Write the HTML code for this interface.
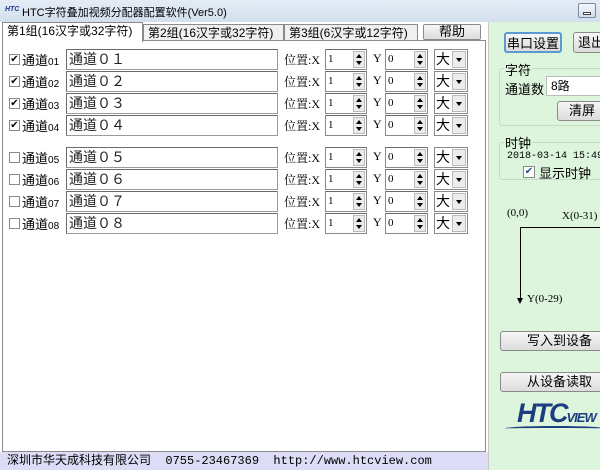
<!DOCTYPE html>
<html><head><meta charset="utf-8"><style>
*{box-sizing:border-box;margin:0;padding:0}
body{width:600px;height:470px;overflow:hidden;position:relative;background:#fff;font-family:"Liberation Sans","Noto Sans CJK SC",sans-serif;font-size:12px;color:#000}
.a{position:absolute}
.title{left:0;top:0;width:600px;height:22px;background:linear-gradient(#e4ecf6,#d3dfee);}
.tab{height:18px;border:1px solid #8a8a8a;border-bottom:none;background:#f0f0f0;font-size:12px;line-height:16px;padding-left:4px;white-space:nowrap}
.panel{left:2px;top:40px;width:484px;height:412px;border:1px solid #8c8c8c;background:#fff}
.cb{width:11px;height:11px;border:1px solid #8a8a8a;background:#fff;font-size:10px;line-height:9px;text-align:center}
.lbl{font-size:13px}
.lbl small{font-size:10px}
.inp{height:21px;border:1px solid #9a9a9a;border-top-color:#6a6a6a;border-left-color:#6a6a6a;background:#fff;font-size:14px;line-height:18px;padding-left:2px;white-space:nowrap;color:#222}
.pos{font-size:12px;font-family:"Liberation Serif","Noto Serif CJK SC",serif}
.spin{height:21px;border:1px solid #8a8a8a;border-top-color:#6a6a6a;background:#fff;font-size:11px;line-height:19px;padding-left:2px;font-family:"Liberation Serif",serif}
.spin i{position:absolute;right:1px;top:1px;width:12px;height:17px;background:#ececec;border:1px solid #bbb}
.spin i:before{content:"";position:absolute;left:2px;top:2px;border:3px solid transparent;border-bottom:4px solid #000;border-top:none}
.spin i:after{content:"";position:absolute;left:2px;bottom:2px;border:3px solid transparent;border-top:4px solid #000;border-bottom:none}
.cmb{height:21px;border:1px solid #8a8a8a;background:#fff;font-size:14px;line-height:19px;padding-left:1px}
.cmb i{position:absolute;right:1px;top:1px;width:14px;height:17px;background:#ececec;border:1px solid #bbb}
.cmb i:after{content:"";position:absolute;left:3px;top:6px;border:3px solid transparent;border-top:4px solid #000;border-bottom:none}
.btn{border:1px solid #8a8a8a;border-radius:3px;background:linear-gradient(#f6f6f6,#dcdcdc);text-align:center;font-size:13px}
.right{left:488px;top:22px;width:112px;height:448px;background:#dcf5dc;border-left:1px solid #c8c8c8}
.grp{border:1px solid #c4dcc4;border-radius:3px}
.status{left:0;top:452px;width:488px;height:18px;background:#dcdcf6;font-size:12px;line-height:18px;padding-left:7px;white-space:pre;font-family:"Liberation Mono","Noto Sans CJK SC",monospace}
</style></head><body>
<div class="a title"></div>
<div class="a" style="left:5px;top:6px;font-size:7px;font-weight:bold;font-style:italic;color:#1a3a8a">HTC</div>
<div class="a" style="left:22px;top:4px;font-size:11px">HTC字符叠加视频分配器配置软件(Ver5.0)</div>
<div class="a" style="left:578px;top:3px;width:18px;height:15px;border:1px solid #7a8aa0;border-radius:2px;background:linear-gradient(#f4f7fb,#d4dce8)"><div class="a" style="left:4px;top:8px;width:8px;height:3px;background:#fff;border:1px solid #444"></div></div>

<div class="a tab" style="left:2px;top:22px;width:141px;height:20px;background:#fff;z-index:2">第1组(16汉字或32字符)</div>
<div class="a tab" style="left:143px;top:24px;width:141px">第2组(16汉字或32字符)</div>
<div class="a tab" style="left:284px;top:24px;width:134px">第3组(6汉字或12字符)</div>
<div class="a btn" style="left:423px;top:24px;width:58px;height:16px;line-height:14px;border-radius:2px">帮助</div>
<div class="a panel"></div>

<div class="a cb" style="left:9px;top:54px">✔</div><div class="a lbl" style="left:22px;top:50px">通道<small>01</small></div><div class="a inp" style="left:66px;top:49px;width:212px">通道０１</div><div class="a pos" style="left:284px;top:51px">位置:X</div><div class="a spin" style="left:325px;top:49px;width:42px">1<i></i></div><div class="a pos" style="left:373px;top:51px">Y</div><div class="a spin" style="left:385px;top:49px;width:43px">0<i></i></div><div class="a cmb" style="left:434px;top:49px;width:34px">大<i></i></div>
<div class="a cb" style="left:9px;top:76px">✔</div><div class="a lbl" style="left:22px;top:72px">通道<small>02</small></div><div class="a inp" style="left:66px;top:71px;width:212px">通道０２</div><div class="a pos" style="left:284px;top:73px">位置:X</div><div class="a spin" style="left:325px;top:71px;width:42px">1<i></i></div><div class="a pos" style="left:373px;top:73px">Y</div><div class="a spin" style="left:385px;top:71px;width:43px">0<i></i></div><div class="a cmb" style="left:434px;top:71px;width:34px">大<i></i></div>
<div class="a cb" style="left:9px;top:98px">✔</div><div class="a lbl" style="left:22px;top:94px">通道<small>03</small></div><div class="a inp" style="left:66px;top:93px;width:212px">通道０３</div><div class="a pos" style="left:284px;top:95px">位置:X</div><div class="a spin" style="left:325px;top:93px;width:42px">1<i></i></div><div class="a pos" style="left:373px;top:95px">Y</div><div class="a spin" style="left:385px;top:93px;width:43px">0<i></i></div><div class="a cmb" style="left:434px;top:93px;width:34px">大<i></i></div>
<div class="a cb" style="left:9px;top:120px">✔</div><div class="a lbl" style="left:22px;top:116px">通道<small>04</small></div><div class="a inp" style="left:66px;top:115px;width:212px">通道０４</div><div class="a pos" style="left:284px;top:117px">位置:X</div><div class="a spin" style="left:325px;top:115px;width:42px">1<i></i></div><div class="a pos" style="left:373px;top:117px">Y</div><div class="a spin" style="left:385px;top:115px;width:43px">0<i></i></div><div class="a cmb" style="left:434px;top:115px;width:34px">大<i></i></div>
<div class="a cb" style="left:9px;top:152px"></div><div class="a lbl" style="left:22px;top:148px">通道<small>05</small></div><div class="a inp" style="left:66px;top:147px;width:212px">通道０５</div><div class="a pos" style="left:284px;top:149px">位置:X</div><div class="a spin" style="left:325px;top:147px;width:42px">1<i></i></div><div class="a pos" style="left:373px;top:149px">Y</div><div class="a spin" style="left:385px;top:147px;width:43px">0<i></i></div><div class="a cmb" style="left:434px;top:147px;width:34px">大<i></i></div>
<div class="a cb" style="left:9px;top:174px"></div><div class="a lbl" style="left:22px;top:170px">通道<small>06</small></div><div class="a inp" style="left:66px;top:169px;width:212px">通道０６</div><div class="a pos" style="left:284px;top:171px">位置:X</div><div class="a spin" style="left:325px;top:169px;width:42px">1<i></i></div><div class="a pos" style="left:373px;top:171px">Y</div><div class="a spin" style="left:385px;top:169px;width:43px">0<i></i></div><div class="a cmb" style="left:434px;top:169px;width:34px">大<i></i></div>
<div class="a cb" style="left:9px;top:196px"></div><div class="a lbl" style="left:22px;top:192px">通道<small>07</small></div><div class="a inp" style="left:66px;top:191px;width:212px">通道０７</div><div class="a pos" style="left:284px;top:193px">位置:X</div><div class="a spin" style="left:325px;top:191px;width:42px">1<i></i></div><div class="a pos" style="left:373px;top:193px">Y</div><div class="a spin" style="left:385px;top:191px;width:43px">0<i></i></div><div class="a cmb" style="left:434px;top:191px;width:34px">大<i></i></div>
<div class="a cb" style="left:9px;top:218px"></div><div class="a lbl" style="left:22px;top:214px">通道<small>08</small></div><div class="a inp" style="left:66px;top:213px;width:212px">通道０８</div><div class="a pos" style="left:284px;top:215px">位置:X</div><div class="a spin" style="left:325px;top:213px;width:42px">1<i></i></div><div class="a pos" style="left:373px;top:215px">Y</div><div class="a spin" style="left:385px;top:213px;width:43px">0<i></i></div><div class="a cmb" style="left:434px;top:213px;width:34px">大<i></i></div>

<div class="a status">深圳市华天成科技有限公司  0755-23467369  http://www.htcview.com</div>

<div class="a right"></div>
<div class="a btn" style="left:504px;top:32px;width:58px;height:21px;line-height:19px;border:2px solid #5a9ad0;font-size:13px">串口设置</div>
<div class="a btn" style="left:573px;top:32px;width:40px;height:21px;line-height:19px;text-align:left;padding-left:4px">退出</div>
<div class="a grp" style="left:499px;top:68px;width:110px;height:58px"></div>
<div class="a" style="left:504px;top:60px;font-size:13px;background:#dcf5dc;padding:0 1px">字符</div>
<div class="a" style="left:505px;top:79px;font-size:13px">通道数</div>
<div class="a" style="left:546px;top:76px;width:60px;height:20px;background:#fff;border:1px solid #bbb;font-size:12px;line-height:18px;padding-left:4px">8路</div>
<div class="a btn" style="left:557px;top:101px;width:50px;height:20px;line-height:18px">清屏</div>
<div class="a grp" style="left:499px;top:142px;width:110px;height:38px"></div>
<div class="a" style="left:504px;top:133px;font-size:13px;background:#dcf5dc;padding:0 1px">时钟</div>
<div class="a" style="left:507px;top:151px;font-size:10px;font-family:'Liberation Mono',monospace;white-space:nowrap">2018-03-14 15:49:2</div>
<div class="a cb" style="left:523px;top:166px;width:12px;height:12px;font-size:10px;color:#2a4a8a">✔</div>
<div class="a" style="left:539px;top:163px;font-size:13px">显示时钟</div>
<div class="a" style="left:507px;top:207px;font-size:11px;font-family:'Liberation Serif',serif">(0,0)</div>
<div class="a" style="left:562px;top:210px;font-size:11px;font-family:'Liberation Serif',serif;white-space:nowrap">X(0-31)</div>
<div class="a" style="left:520px;top:227px;width:80px;height:1px;background:#000"></div>
<div class="a" style="left:520px;top:227px;width:1px;height:73px;background:#000"></div>
<div class="a" style="left:517px;top:298px;border:3px solid transparent;border-top:6px solid #000"></div>
<div class="a" style="left:527px;top:293px;font-size:11px;font-family:'Liberation Serif',serif">Y(0-29)</div>
<div class="a btn" style="left:500px;top:331px;width:110px;height:20px;line-height:18px;text-align:left;padding-left:26px">写入到设备</div>
<div class="a btn" style="left:500px;top:372px;width:110px;height:20px;line-height:18px;text-align:left;padding-left:26px">从设备读取</div>
<div class="a" style="left:517px;top:398px;font-size:27px;font-weight:bold;font-style:italic;color:#1c3d80;font-family:'Liberation Sans',sans-serif;letter-spacing:-2px;line-height:30px">HTC<span style="font-size:13px;letter-spacing:-1px">VIEW</span></div>
<div class="a" style="left:505px;top:426px;width:100px;height:5px;border-top:2px solid #1c3d80;border-radius:50% 50% 0 0"></div>
</body></html>
